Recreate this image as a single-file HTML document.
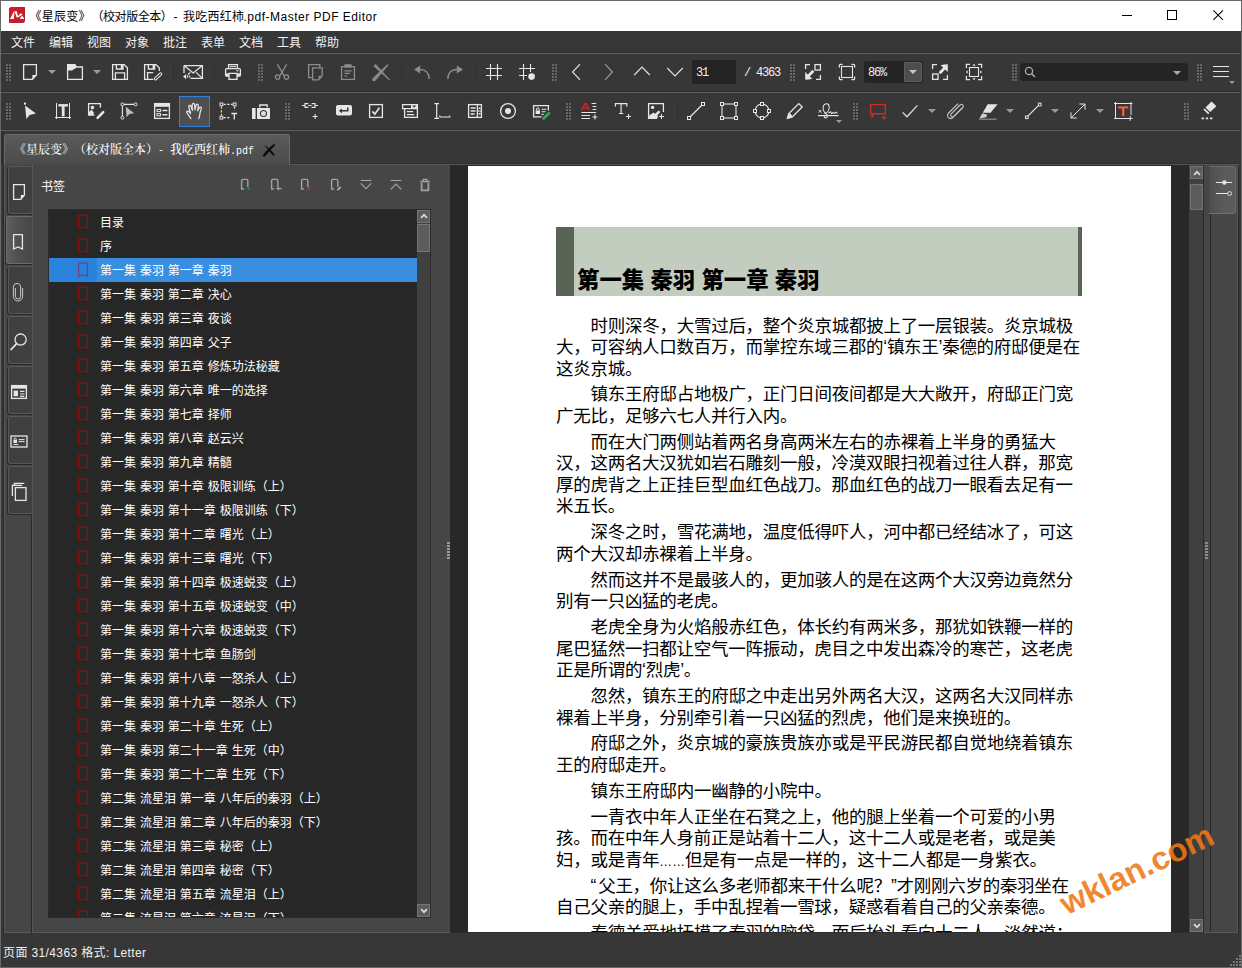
<!DOCTYPE html>
<html lang="zh-CN">
<head>
<meta charset="utf-8">
<title>《星辰变》（校对版全本）- 我吃西红柿.pdf-Master PDF Editor</title>
<style>
*{box-sizing:border-box;margin:0;padding:0}
html,body{width:1242px;height:968px;overflow:hidden}
body{position:relative;background:#373737;font-family:"Liberation Sans","Noto Sans CJK SC",sans-serif;font-size:12px;color:#f0f0f0;text-spacing-trim:space-all}
.abs{position:absolute}
.ic{position:absolute;overflow:visible;z-index:10}
#win{position:absolute;left:0;top:0;width:1242px;height:968px;border:1px solid #686868;pointer-events:none;z-index:50}
#title{position:absolute;left:1px;top:1px;width:1240px;height:30px;background:#fff;color:#000}
#title .txt{position:absolute;left:28.5px;top:7.5px;font-size:12px;line-height:16px;white-space:nowrap;letter-spacing:.25px}
#title .txt i{position:absolute;top:0;font-style:normal}
#menu{position:absolute;left:1px;top:31px;width:1240px;height:22px;background:#373737}
#menu span{position:absolute;top:4px;line-height:17px;font-size:12px;color:#f2f2f2;white-space:nowrap}
.hl{position:absolute;left:1px;width:1239px;height:2px;background:#606060;border-top:1px solid #2f2f2f;margin-top:-1px}
.grip{position:absolute;width:6px;height:18px;background-image:radial-gradient(circle,#6e6e6e 0.9px,transparent 1.1px);background-size:3px 3px}
.vsep{position:absolute;width:1px;height:20px;background:#2f2f2f}
.dd{position:absolute;width:0;height:0;border-left:4px solid transparent;border-right:4px solid transparent;border-top:4px solid #9a9a9a}
.box{position:absolute;background:#242424;border-radius:3px}
.tbtxt{position:absolute;font-size:12px;color:#f0f0f0;white-space:nowrap;line-height:14px;font-family:"Liberation Mono","Noto Sans CJK SC",monospace;letter-spacing:-1.2px}
#handbtn{position:absolute;left:179px;top:96px;width:31px;height:31px;border:1px solid #2a82da;background:#4f4f4f}
#tab{position:absolute;left:4px;top:134px;width:286px;height:31px;border:1px solid #6a6a6a;border-bottom:0;border-radius:3px 3px 0 0;background:linear-gradient(#5a5a5a,#4e4e4e 85%,#484848)}
#tab span{position:absolute;left:9px;top:6px;font-family:"Noto Serif CJK SC","Liberation Serif",serif;font-weight:500;font-size:12px;line-height:16px;color:#fff;white-space:nowrap}
#tab span b{font-weight:normal;font-family:"Liberation Mono",monospace;font-size:10px}
#leftedge{position:absolute;left:1px;top:131px;width:3px;height:34px;background:#303030}
#leftedge2{position:absolute;left:1px;top:165px;width:3px;height:769px;background:#383838;border-right:1px solid #272727}
#leftbar{position:absolute;left:4px;top:165px;width:28px;height:769px;background:#464646;border-left:1px solid #585858;border-right:1px solid #2a2a2a;border-bottom:1px solid #272727;box-shadow:inset 0 -1px 0 #5a5a5a}
.vtab{position:absolute;left:3px;width:24px;height:48px;border:1px solid #585858;border-right:0;border-radius:3px 0 0 3px;background:#404040;box-shadow:-1px 1px 0 #2a2a2a}
.vtab.on{left:1px;width:27px;background:linear-gradient(90deg,#5e5e5e,#505050 40%,#464646);border-color:#6c6c6c}
#panel{position:absolute;left:32px;top:165px;width:418px;height:769px;background:#464646;border-left:1px solid #585858;border-bottom:1px solid #272727;box-shadow:inset 0 -1px 0 #5a5a5a}
#list{position:absolute;left:48px;top:209px;width:383px;height:709px;background:#272727;overflow:hidden;border:1px solid #2b2b2b}
#rows{position:absolute;left:0;top:0;width:368px;height:707px;overflow:hidden}
.row{position:absolute;left:0;width:368px;height:24px;white-space:nowrap}
.row span{position:absolute;left:48px;top:0;height:24px;padding-left:3px;line-height:27px;font-size:12px;color:#fff;word-spacing:.55px;right:0}
.row .bk{position:absolute;left:28px;top:4px}
.row.sel .bk path{stroke:#6a4590}
.row.sel{background:#2a82da}
.row.sel span{background:#3a8ee0}
.sb{position:absolute;background:#404040}
.sbb{position:absolute;width:13px;height:13px;background:#5c5c5c;border:1px solid #747474}
.thumb{position:absolute;width:13px;background:#5c5c5c;border:1px solid #757575}
#doc{position:absolute;left:450px;top:165px;width:739px;height:768px;background:#282828;overflow:hidden;border-bottom:1px solid #2b2b2b}
#page{position:absolute;left:18px;top:1px;width:703px;height:780px;background:#fff;color:#000}
#hd{position:absolute;left:88px;top:61px;width:526px;height:69px;background:#c2cdc0;border-left:18px solid #596457;border-right:4px solid #596457}
#hd span{position:absolute;left:3px;top:40px;font-family:"Liberation Sans","Noto Sans CJK SC",sans-serif;font-weight:900;font-size:22.4px;line-height:28px;white-space:nowrap;color:#000}
.ln i{font-style:normal;font-size:12.8px;letter-spacing:0}
.ln b{font-weight:normal;margin-right:2px}
.ln{position:absolute;font-size:17.5px;letter-spacing:-.275px;line-height:24px;white-space:nowrap;color:#000;font-family:"Liberation Sans","Noto Sans CJK SC",sans-serif}
#wm{position:absolute;left:1136.5px;top:869.5px;font:bold 32.5px "Liberation Sans",sans-serif;color:rgba(240,120,20,.88);transform:translate(-50%,-50%) rotate(-25.8deg);white-space:nowrap;z-index:40}
#status{position:absolute;left:1px;top:933px;width:1239px;height:33px;background:#373737}
#status span{position:absolute;left:2px;top:12px;font-size:12px;line-height:16px;color:#f0f0f0;white-space:nowrap;letter-spacing:.38px}
#rpanel{position:absolute;left:1203px;top:165px;width:36px;height:769px;background:#464646;border-left:1px solid #2b2b2b;border-right:1px solid #272727;border-bottom:1px solid #272727;box-shadow:inset -1px -1px 0 #5a5a5a}
#rpanel i{position:absolute;left:6px;top:49px;width:1px;height:718px;background:#272727}
</style>
</head>
<body>
<div id="title">
<svg class="ic" style="left:8px;top:6px" width="16" height="16" viewBox="0 0 16 16"><defs><linearGradient id="lg" x1="0" y1="0" x2="1" y2="1"><stop offset="0" stop-color="#e01426"/><stop offset="1" stop-color="#b8222e"/></linearGradient></defs><path d="M1.600 0H16V14.400L14.400 16H0V1.600Z" fill="url(#lg)"/><path d="M1 12.100L4.700 4.800l.700-.200-.400 7.500zM5.700 4.200h2l1.400 5 2.500-3 2.100 1.400-4.700 3-1.400-.400-1.700-4.600zM10.800 11l2.700-2.200 1.700 3.300h-3.600z" fill="#fff"/></svg>
<div class="txt"><i style="left:0">《星辰变》</i><i style="left:62px;letter-spacing:-.45px">（校对版全本）</i><i style="left:144px">-</i><i style="left:153.500px">我吃西红柿</i><i style="left:214px;letter-spacing:.5px">.pdf-Master PDF Editor</i></div>
<svg class="ic" style="left:1121px;top:14px" width="10" height="1" viewBox="0 0 10 1" shape-rendering="crispEdges"><rect x="0" y="0" width="10" height="1" fill="#000"/></svg>
<svg class="ic" style="left:1166px;top:9px" width="10" height="10" viewBox="0 0 10 10" shape-rendering="crispEdges"><rect x=".5" y=".5" width="9" height="9" fill="none" stroke="#000" stroke-width="1"/></svg>
<svg class="ic" style="left:1212px;top:9px" width="11" height="11" viewBox="0 0 11 11"><path d="M.4 .4l9.500 9.500M9.900 .4l-9.500 9.500" stroke="#000" stroke-width="1.050"/></svg>
</div>
<div id="menu">
<span style="left:10px">文件</span><span style="left:48px">编辑</span><span style="left:86px">视图</span><span style="left:124px">对象</span><span style="left:162px">批注</span><span style="left:200px">表单</span><span style="left:238px">文档</span><span style="left:276px">工具</span><span style="left:314px">帮助</span>
</div>
<div class="hl" style="top:53px"></div>
<div class="hl" style="top:92px"></div>
<div class="hl" style="top:130px"></div>
<div id="handbtn"></div>
<svg class="ic" style="left:6px;top:64px" width="5" height="17" viewBox="0 0 5 17" ><rect x="0" y="0" width="2" height="2" fill="#676767"/><rect x="0" y="3" width="2" height="2" fill="#676767"/><rect x="0" y="6" width="2" height="2" fill="#676767"/><rect x="0" y="9" width="2" height="2" fill="#676767"/><rect x="0" y="12" width="2" height="2" fill="#676767"/><rect x="0" y="15" width="2" height="2" fill="#676767"/><rect x="3" y="0" width="2" height="2" fill="#676767"/><rect x="3" y="3" width="2" height="2" fill="#676767"/><rect x="3" y="6" width="2" height="2" fill="#676767"/><rect x="3" y="9" width="2" height="2" fill="#676767"/><rect x="3" y="12" width="2" height="2" fill="#676767"/><rect x="3" y="15" width="2" height="2" fill="#676767"/></svg>
<svg class="ic" style="left:22px;top:63px" width="16" height="18" viewBox="0 0 16 18" ><path d="M1.6 1.6h12.800v10.400l-4 4.400H1.600z" fill="none" stroke="#e6e6e6" stroke-width="1.3"/><path d="M14.400 12l-4 4.400v-4.400z" fill="#e6e6e6"/></svg>
<div class="dd" style="left:48px;top:70px;border-top-color:#9a9a9a"></div>
<svg class="ic" style="left:66px;top:63px" width="18" height="18" viewBox="0 0 18 18" ><path d="M1.600 16.400V1.600h7.400l1.600 2.400h5.800v12.400z" fill="none" stroke="#e6e6e6" stroke-width="1.3"/><path d="M1.600 1.600h7.400l1.600 2.400v.600l-4.600 2.800h-4.400z" fill="#e6e6e6"/></svg>
<div class="dd" style="left:93px;top:70px;border-top-color:#9a9a9a"></div>
<svg class="ic" style="left:111px;top:63px" width="18" height="18" viewBox="0 0 18 18" ><path d="M1.600 1.600h11.600l3.200 3.200v11.600H1.600z" fill="none" stroke="#e6e6e6" stroke-width="1.3"/><path d="M5.400 1.600v4.400h6.600V1.600" fill="none" stroke="#e6e6e6" stroke-width="1.3"/><path d="M9.800 1.600h2.200v4.400H9.800z" fill="#e6e6e6"/><path d="M4.400 16.400v-6.600h9.200v6.600" fill="none" stroke="#e6e6e6" stroke-width="1.3"/></svg>
<svg class="ic" style="left:143px;top:63px" width="20" height="18" viewBox="0 0 20 18" ><path d="M10.400 16.400H1.600V1.600h11.400l3.400 3.400v3" fill="none" stroke="#e6e6e6" stroke-width="1.3"/><path d="M5.400 1.600v4.400h6.200V1.600" fill="none" stroke="#e6e6e6" stroke-width="1.3"/><path d="M9.600 1.600h2v4.400h-2z" fill="#e6e6e6"/><path d="M4.600 16.400v-6.800h5.600" fill="none" stroke="#e6e6e6" stroke-width="1.3"/><path d="M12.600 15.800l5-4.800" stroke="#e6e6e6" stroke-width="3.300" stroke-linecap="round"/><path d="M12.600 15.800l5-4.800" stroke="#373737" stroke-width="1.200" stroke-linecap="round"/></svg>
<div class="vsep" style="left:173px;top:62px"></div>
<svg class="ic" style="left:182px;top:63px" width="22" height="18" viewBox="0 0 22 18" ><path d="M2 2.600h18.400v12.800H8.400" fill="none" stroke="#e6e6e6" stroke-width="1.3"/><path d="M2 2.600v7.400" fill="none" stroke="#e6e6e6" stroke-width="1.3"/><path d="M2 2.600l9.200 7.400 9.200-7.400M20.400 15.400l-6.300-6M8.300 9.400L6 11.600" fill="none" stroke="#e6e6e6" stroke-width="1.3"/><path d="M1 13.600l3.200-2.600v5.200z" fill="#e6e6e6"/><path d="M5 12.400h1.200v2.200H5zM7 12.400h1.200v2.200H7z" fill="#e6e6e6"/></svg>
<div class="vsep" style="left:214px;top:62px"></div>
<svg class="ic" style="left:224px;top:63px" width="18" height="18" viewBox="0 0 18 18" ><path d="M4.600 5.400V1.600h8.800v3.800" fill="none" stroke="#e6e6e6" stroke-width="1.3"/><path d="M6 3.600h6" stroke="#e6e6e6" stroke-width="1"/><rect x="1.600" y="5.600" width="14.800" height="7.600" rx="1.200" fill="none" stroke="#e6e6e6" stroke-width="1.3"/><path d="M2 10.400h14v2.600H2z" fill="#e6e6e6"/><path d="M5 10.400h8v6H5z" fill="#373737" stroke="#e6e6e6" stroke-width="1.300"/><path d="M12.400 7.800h2" stroke="#e6e6e6" stroke-width="1.200"/></svg>
<svg class="ic" style="left:258px;top:64px" width="5" height="17" viewBox="0 0 5 17" ><rect x="0" y="0" width="2" height="2" fill="#676767"/><rect x="0" y="3" width="2" height="2" fill="#676767"/><rect x="0" y="6" width="2" height="2" fill="#676767"/><rect x="0" y="9" width="2" height="2" fill="#676767"/><rect x="0" y="12" width="2" height="2" fill="#676767"/><rect x="0" y="15" width="2" height="2" fill="#676767"/><rect x="3" y="0" width="2" height="2" fill="#676767"/><rect x="3" y="3" width="2" height="2" fill="#676767"/><rect x="3" y="6" width="2" height="2" fill="#676767"/><rect x="3" y="9" width="2" height="2" fill="#676767"/><rect x="3" y="12" width="2" height="2" fill="#676767"/><rect x="3" y="15" width="2" height="2" fill="#676767"/></svg>
<svg class="ic" style="left:274px;top:63px" width="16" height="18" viewBox="0 0 16 18" ><path d="M3.400 1.400l6.600 11.200M12.600 1.400L6 12.600" fill="none" stroke="#8c8c8c" stroke-width="1.3"/><circle cx="3.600" cy="14" r="2.200" fill="none" stroke="#8c8c8c" stroke-width="1.3"/><circle cx="12.400" cy="14" r="2.200" fill="none" stroke="#8c8c8c" stroke-width="1.3"/></svg>
<svg class="ic" style="left:307px;top:63px" width="16" height="18" viewBox="0 0 16 18" ><path d="M1.600 1.600h11.200v13H1.600z" fill="none" stroke="#8c8c8c" stroke-width="1.3"/><path d="M5.600 4.800h9.600v8l-3.600 4H5.600z" fill="#373737" stroke="#8c8c8c" stroke-width="1.300"/><path d="M15.200 12.800l-3.600 4v-4z" fill="#8c8c8c"/></svg>
<svg class="ic" style="left:340px;top:63px" width="16" height="18" viewBox="0 0 16 18" ><path d="M1.600 3.600h12.800v12.800H1.600z" fill="none" stroke="#8c8c8c" stroke-width="1.3"/><path d="M4.400 1.200h7.200v3.400H4.400z" fill="#8c8c8c"/><path d="M4.400 7.800h7.200M4.400 10.400h5.600M4.400 13h3" stroke="#8c8c8c" stroke-width="1.200"/></svg>
<svg class="ic" style="left:371px;top:63px" width="20" height="19" viewBox="0 0 20 19" ><path d="M1.400 15.400L16.400 1.200l1.200.800L4.400 17.800c-1.600 1.400-4.200-.800-3-2.400z" fill="#8c8c8c"/><path d="M2.400 3l2.200-2L19 16.800l-.600.600z" fill="#8c8c8c"/></svg>
<div class="vsep" style="left:401px;top:62px"></div>
<svg class="ic" style="left:413px;top:64px" width="18" height="16" viewBox="0 0 18 16" ><path d="M16.200 15c0-6-3.500-9.600-9.200-9.600" fill="none" stroke="#8c8c8c" stroke-width="1.500"/><path d="M1 5.400l6.200-4v8z" fill="#8c8c8c"/></svg>
<svg class="ic" style="left:446px;top:64px" width="18" height="16" viewBox="0 0 18 16" ><path d="M1.800 15c0-6 3.500-9.600 9.200-9.600" fill="none" stroke="#8c8c8c" stroke-width="1.500"/><path d="M17 5.400l-6.200-4v8z" fill="#8c8c8c"/></svg>
<div class="vsep" style="left:475px;top:62px"></div>
<svg class="ic" style="left:485px;top:63px" width="18" height="18" viewBox="0 0 18 18" ><path d="M5.500 1v16M12.500 1v16M1 5.500h16M1 12.500h16" fill="none" stroke="#e6e6e6" stroke-width="1.1"/></svg>
<svg class="ic" style="left:518px;top:63px" width="18" height="18" viewBox="0 0 18 18" ><path d="M5.500 1v16M12.500 1v8M1 5.500h16M1 12.500h8" fill="none" stroke="#e6e6e6" stroke-width="1.1"/><circle cx="13.600" cy="13.600" r="3.300" fill="#e6e6e6"/></svg>
<svg class="ic" style="left:552px;top:64px" width="5" height="17" viewBox="0 0 5 17" ><rect x="0" y="0" width="2" height="2" fill="#676767"/><rect x="0" y="3" width="2" height="2" fill="#676767"/><rect x="0" y="6" width="2" height="2" fill="#676767"/><rect x="0" y="9" width="2" height="2" fill="#676767"/><rect x="0" y="12" width="2" height="2" fill="#676767"/><rect x="0" y="15" width="2" height="2" fill="#676767"/><rect x="3" y="0" width="2" height="2" fill="#676767"/><rect x="3" y="3" width="2" height="2" fill="#676767"/><rect x="3" y="6" width="2" height="2" fill="#676767"/><rect x="3" y="9" width="2" height="2" fill="#676767"/><rect x="3" y="12" width="2" height="2" fill="#676767"/><rect x="3" y="15" width="2" height="2" fill="#676767"/></svg>
<svg class="ic" style="left:571px;top:63px" width="10" height="18" viewBox="0 0 10 18" ><path d="M9 1.200L1.600 9 9 16.800" fill="none" stroke="#e6e6e6" stroke-width="1.1"/></svg>
<svg class="ic" style="left:604px;top:63px" width="10" height="18" viewBox="0 0 10 18" ><path d="M1 1.200L8.400 9 1 16.800" fill="none" stroke="#a0a0a0" stroke-width="1.100"/></svg>
<svg class="ic" style="left:633px;top:65px" width="18" height="11" viewBox="0 0 18 11" ><path d="M1.200 10L9 2l7.800 8" fill="none" stroke="#e6e6e6" stroke-width="1.1"/></svg>
<svg class="ic" style="left:666px;top:67px" width="18" height="11" viewBox="0 0 18 11" ><path d="M1.200 1L9 9l7.800-8" fill="none" stroke="#e6e6e6" stroke-width="1.1"/></svg>
<div class="box" style="left:692px;top:60px;width:44px;height:24px"></div>
<div class="tbtxt" style="left:696px;top:66px">31</div>
<div class="tbtxt" style="left:744px;top:66px">/ 4363</div>
<svg class="ic" style="left:790px;top:64px" width="5" height="17" viewBox="0 0 5 17" ><rect x="0" y="0" width="2" height="2" fill="#676767"/><rect x="0" y="3" width="2" height="2" fill="#676767"/><rect x="0" y="6" width="2" height="2" fill="#676767"/><rect x="0" y="9" width="2" height="2" fill="#676767"/><rect x="0" y="12" width="2" height="2" fill="#676767"/><rect x="0" y="15" width="2" height="2" fill="#676767"/><rect x="3" y="0" width="2" height="2" fill="#676767"/><rect x="3" y="3" width="2" height="2" fill="#676767"/><rect x="3" y="6" width="2" height="2" fill="#676767"/><rect x="3" y="9" width="2" height="2" fill="#676767"/><rect x="3" y="12" width="2" height="2" fill="#676767"/><rect x="3" y="15" width="2" height="2" fill="#676767"/></svg>
<svg class="ic" style="left:804px;top:63px" width="18" height="18" viewBox="0 0 18 18" ><path d="M1.600 6V1.600H6M16.400 12v4.400H12" fill="none" stroke="#e6e6e6" stroke-width="1.3"/><rect x="11" y="1.600" width="5.400" height="5.400" fill="none" stroke="#e6e6e6" stroke-width="1.3"/><path d="M1.200 16.800V9l2.600 2.400 4.600-4.600 2 2-4.600 4.600 2.600 2.400c-2.400.600-4.800 1-7.200 1z" fill="#e6e6e6"/></svg>
<svg class="ic" style="left:838px;top:63px" width="18" height="18" viewBox="0 0 18 18" ><rect x="3.500" y="3.500" width="11" height="11" fill="none" stroke="#e6e6e6" stroke-width="1.1"/><path d="M1.400 4.600V2.600a1.200 1.200 0 011.200-1.200h2M13.400 1.400h2a1.200 1.200 0 011.200 1.200v2M16.600 13.400v2a1.200 1.200 0 01-1.200 1.200h-2M4.600 16.600h-2a1.200 1.200 0 01-1.200-1.200v-2" fill="none" stroke="#e6e6e6" stroke-width="1.3"/></svg>
<div class="box" style="left:864px;top:61px;width:59px;height:22px;border-radius:3px"></div>
<div class="abs" style="left:904px;top:62px;width:18px;height:20px;background:#4e4e4e;border:1px solid #5c5c5c;border-radius:0 2px 2px 0"></div>
<div class="tbtxt" style="left:868px;top:66px">86%</div>
<div class="dd" style="left:909px;top:70px;border-top-color:#c8c8c8"></div>
<svg class="ic" style="left:931px;top:63px" width="18" height="18" viewBox="0 0 18 18" ><path d="M1.600 6V1.600H6M16.400 12v4.400H12" fill="none" stroke="#e6e6e6" stroke-width="1.3"/><rect x="1.600" y="11" width="5.400" height="5.400" fill="none" stroke="#e6e6e6" stroke-width="1.3"/><path d="M16.800 1.200V9l-2.600-2.400-4.600 4.600-2-2 4.600-4.600-2.600-2.400c2.400-.600 4.800-1 7.200-1z" fill="#e6e6e6"/></svg>
<svg class="ic" style="left:965px;top:63px" width="18" height="18" viewBox="0 0 18 18" ><rect x="4.500" y="4.500" width="9" height="9" fill="none" stroke="#e6e6e6" stroke-width="1.1"/><path d="M1.400 5V1.400H5M13 1.400h3.600V5M16.600 13v3.600H13M5 16.600H1.400V13" fill="none" stroke="#e6e6e6" stroke-width="1.3"/><path d="M9 .8l1.600 2H7.400zM9 17.200l1.600-2H7.400zM.8 9l2-1.600v3.200zM17.200 9l-2-1.600v3.200z" fill="#e6e6e6"/></svg>
<div class="abs" style="left:994px;top:66px;font-size:10px;color:#3b3b3b;letter-spacing:-2px">&gt;&gt;</div>
<svg class="ic" style="left:1012px;top:64px" width="5" height="17" viewBox="0 0 5 17" ><rect x="0" y="0" width="2" height="2" fill="#676767"/><rect x="0" y="3" width="2" height="2" fill="#676767"/><rect x="0" y="6" width="2" height="2" fill="#676767"/><rect x="0" y="9" width="2" height="2" fill="#676767"/><rect x="0" y="12" width="2" height="2" fill="#676767"/><rect x="0" y="15" width="2" height="2" fill="#676767"/><rect x="3" y="0" width="2" height="2" fill="#676767"/><rect x="3" y="3" width="2" height="2" fill="#676767"/><rect x="3" y="6" width="2" height="2" fill="#676767"/><rect x="3" y="9" width="2" height="2" fill="#676767"/><rect x="3" y="12" width="2" height="2" fill="#676767"/><rect x="3" y="15" width="2" height="2" fill="#676767"/></svg>
<div class="box" style="left:1020px;top:63px;width:168px;height:18px;border-radius:4px"></div>
<svg class="ic" style="left:1024px;top:66px" width="13" height="13" viewBox="0 0 13 13" ><circle cx="5" cy="5" r="3.600" fill="none" stroke="#a8a8a8" stroke-width="1.300"/><path d="M7.600 7.600l3.400 3.400" stroke="#a8a8a8" stroke-width="1.500"/></svg>
<div class="dd" style="left:1173px;top:71px;border-top-color:#a8a8a8"></div>
<svg class="ic" style="left:1197px;top:64px" width="5" height="17" viewBox="0 0 5 17" ><rect x="0" y="0" width="2" height="2" fill="#676767"/><rect x="0" y="3" width="2" height="2" fill="#676767"/><rect x="0" y="6" width="2" height="2" fill="#676767"/><rect x="0" y="9" width="2" height="2" fill="#676767"/><rect x="0" y="12" width="2" height="2" fill="#676767"/><rect x="0" y="15" width="2" height="2" fill="#676767"/><rect x="3" y="0" width="2" height="2" fill="#676767"/><rect x="3" y="3" width="2" height="2" fill="#676767"/><rect x="3" y="6" width="2" height="2" fill="#676767"/><rect x="3" y="9" width="2" height="2" fill="#676767"/><rect x="3" y="12" width="2" height="2" fill="#676767"/><rect x="3" y="15" width="2" height="2" fill="#676767"/></svg>
<svg class="ic" style="left:1213px;top:65px" width="17" height="13" viewBox="0 0 17 13" ><path d="M0 1.500h16M0 6.500h16M0 11.500h16" stroke="#e6e6e6" stroke-width="1.100"/></svg>
<div class="dd" style="left:1229px;top:81px;border-width:3px 3px 0 3px;border-top-color:#9a9a9a"></div>
<svg class="ic" style="left:6px;top:103px" width="5" height="17" viewBox="0 0 5 17" ><rect x="0" y="0" width="2" height="2" fill="#676767"/><rect x="0" y="3" width="2" height="2" fill="#676767"/><rect x="0" y="6" width="2" height="2" fill="#676767"/><rect x="0" y="9" width="2" height="2" fill="#676767"/><rect x="0" y="12" width="2" height="2" fill="#676767"/><rect x="0" y="15" width="2" height="2" fill="#676767"/><rect x="3" y="0" width="2" height="2" fill="#676767"/><rect x="3" y="3" width="2" height="2" fill="#676767"/><rect x="3" y="6" width="2" height="2" fill="#676767"/><rect x="3" y="9" width="2" height="2" fill="#676767"/><rect x="3" y="12" width="2" height="2" fill="#676767"/><rect x="3" y="15" width="2" height="2" fill="#676767"/></svg>
<svg class="ic" style="left:19px;top:101px" width="18" height="20" viewBox="0 0 18 20" ><path d="M6 4.400l1.400 13.600 3.200-4 6.400-1.400z" fill="#e6e6e6"/><rect x="5" y="1.600" width="2" height="2" fill="#e6e6e6"/></svg>
<svg class="ic" style="left:54px;top:102px" width="18" height="18" viewBox="0 0 18 18" ><path d="M2.500 1v16M15.500 1v16M1 15.500h16" stroke="#e6e6e6" stroke-width="1"/><path d="M1 15.500l1.500-1.200v2.400zM17 15.500l-1.500-1.200v2.400z" fill="#e6e6e6"/><path d="M4.400 3.300h9.600" stroke="#e6e6e6" stroke-width="2.400" fill="none"/><path d="M9.200 3v11.400" stroke="#e6e6e6" stroke-width="2.800" fill="none"/></svg>
<svg class="ic" style="left:87px;top:102px" width="20" height="18" viewBox="0 0 20 18" ><path d="M13.400 5.600V1.600H1.600v11.400h5.800" fill="none" stroke="#e6e6e6" stroke-width="1.3"/><circle cx="5.400" cy="5.600" r="1.800" fill="#e6e6e6"/><path d="M2 13v-3l2.400-2.200 2.600 2.600-1.200 2.600z" fill="#e6e6e6"/><path d="M10.600 15.800l5.600-5.600" stroke="#e6e6e6" stroke-width="2.600" stroke-linecap="round"/></svg>
<svg class="ic" style="left:120px;top:102px" width="20" height="18" viewBox="0 0 20 18" ><path d="M2.400 14.600V2.400h12.200" fill="none" stroke="#e6e6e6" stroke-width="1.1"/><circle cx="2.400" cy="2.400" r="1.500" fill="#373737" stroke="#e6e6e6" stroke-width="1"/><circle cx="15.600" cy="2.400" r="1.500" fill="#373737" stroke="#e6e6e6" stroke-width="1"/><circle cx="2.400" cy="15.600" r="1.500" fill="#373737" stroke="#e6e6e6" stroke-width="1"/><path d="M5.800 4.800l.8 10.400 2.800-3.200 4.800-.8z" fill="#bdbdbd"/></svg>
<svg class="ic" style="left:153px;top:102px" width="18" height="18" viewBox="0 0 18 18" ><rect x="1.600" y="1.600" width="14.800" height="14.800" fill="none" stroke="#e6e6e6" stroke-width="1.3"/><path d="M1.600 1.600h14.800v3.200H1.600z" fill="#e6e6e6"/><rect x="4" y="7.400" width="3.600" height="2.200" fill="none" stroke="#e6e6e6" stroke-width="1"/><rect x="4" y="11.600" width="3.600" height="2.200" fill="none" stroke="#e6e6e6" stroke-width="1"/><path d="M9.400 8.500h5M9.400 12.700h5" stroke="#e6e6e6" stroke-width="1.600"/></svg>
<svg class="ic" style="left:185px;top:102px" width="19" height="18" viewBox="0 0 19 18" ><path d="M6.200 17c-1.400-2-2.200-3.400-4-5.600-.9-1.200-.4-2.400.8-2.200 1.200.3 1.800 1.500 2.600 2.400C5 9 4.200 6.600 3.800 4.800 3.500 3.200 5.300 2.700 5.900 4.200L7.400 8.400C7.200 6 7 4 7.200 2.600 7.500 1.100 9.400 1.100 9.600 2.600L10 8c.3-1.800.6-3.600 1.100-4.900.6-1.500 2.400-1 2.200.6L12.700 8.800c.6-1.300 1-2.300 1.700-3.200.9-1.100 2.300-.4 1.900 1-.8 2.400-1.300 3.800-1.500 5.600-.2 1.800-.6 3.300-1.200 4.800" fill="none" stroke="#e6e6e6" stroke-width="1.250" stroke-linejoin="round"/></svg>
<svg class="ic" style="left:219px;top:102px" width="20" height="18" viewBox="0 0 20 18" ><path d="M4.600 2.400h9M2.400 4.600v9M4.600 15.600h6M15.600 4.600v4" fill="none" stroke="#e6e6e6" stroke-width="1.100" stroke-dasharray="2.200 1.400"/><rect x="1" y="1" width="2.8" height="2.8" fill="#373737" stroke="#e6e6e6" stroke-width="1"/><rect x="14.2" y="1" width="2.8" height="2.8" fill="#373737" stroke="#e6e6e6" stroke-width="1"/><rect x="1" y="14.2" width="2.8" height="2.8" fill="#373737" stroke="#e6e6e6" stroke-width="1"/><path d="M12.400 11.500h5.800M15.300 11.500V17.600" stroke="#e6e6e6" stroke-width="1.300"/></svg>
<svg class="ic" style="left:251px;top:103px" width="20" height="16" viewBox="0 0 20 16" ><path d="M1 5h3.600v11H1z" fill="#e6e6e6"/><path d="M6 5h13v11H6z" fill="#e6e6e6"/><path d="M8.800 4.600V2h7.400v2.600" fill="none" stroke="#e6e6e6" stroke-width="1.3"/><circle cx="12.500" cy="10.500" r="3.600" fill="#373737"/><circle cx="12.500" cy="10.500" r="2.500" fill="#dcdcdc"/></svg>
<svg class="ic" style="left:285px;top:103px" width="5" height="17" viewBox="0 0 5 17" ><rect x="0" y="0" width="2" height="2" fill="#676767"/><rect x="0" y="3" width="2" height="2" fill="#676767"/><rect x="0" y="6" width="2" height="2" fill="#676767"/><rect x="0" y="9" width="2" height="2" fill="#676767"/><rect x="0" y="12" width="2" height="2" fill="#676767"/><rect x="0" y="15" width="2" height="2" fill="#676767"/><rect x="3" y="0" width="2" height="2" fill="#676767"/><rect x="3" y="3" width="2" height="2" fill="#676767"/><rect x="3" y="6" width="2" height="2" fill="#676767"/><rect x="3" y="9" width="2" height="2" fill="#676767"/><rect x="3" y="12" width="2" height="2" fill="#676767"/><rect x="3" y="15" width="2" height="2" fill="#676767"/></svg>
<svg class="ic" style="left:301px;top:101px" width="18" height="18" viewBox="0 0 18 18" ><path d="M1 4.500h3M7.400 4.500h3.200M14 4.500H17" stroke="#e6e6e6" stroke-width="1.100"/><path d="M7.400 2.600H4v3.800h3.400M10.600 2.600H14v3.800h-3.400" fill="none" stroke="#e6e6e6" stroke-width="1.100"/><path d="M11.600 15.500h5M14.100 13v5" stroke="#e6e6e6" stroke-width="1.100"/></svg>
<svg class="ic" style="left:335px;top:104px" width="18" height="13" viewBox="0 0 18 13" ><rect x="1" y="1" width="16" height="10.500" rx="2" fill="#e6e6e6"/><path d="M12.800 3.400v3.400H6" fill="none" stroke="#373737" stroke-width="1.500"/><path d="M3.800 6.800l3.200-2.400v4.800z" fill="#373737"/></svg>
<svg class="ic" style="left:368px;top:103px" width="16" height="16" viewBox="0 0 16 16" ><rect x="1.600" y="1.600" width="12.800" height="12.800" fill="none" stroke="#e6e6e6" stroke-width="1.3"/><path d="M4.400 8.400l2.400 2.800 4.600-6.400" fill="none" stroke="#e6e6e6" stroke-width="1.700"/></svg>
<svg class="ic" style="left:401px;top:103px" width="18" height="16" viewBox="0 0 18 16" ><path d="M1.600 1.600h14.800v4H1.600z" fill="none" stroke="#e6e6e6" stroke-width="1.3"/><path d="M10 1.600h6.400v4H10z" fill="#e6e6e6"/><path d="M11.200 2.600h4l-2 2.200z" fill="#373737"/><path d="M3.600 5.600v8.800h12.800V5.600" fill="none" stroke="#e6e6e6" stroke-width="1.3"/><path d="M5.800 8.600h6.400M5.800 11.600h7.400" stroke="#e6e6e6" stroke-width="1.300"/></svg>
<svg class="ic" style="left:433px;top:102px" width="18" height="18" viewBox="0 0 18 18" ><path d="M1.400 1.600h4.600M1.400 16.400h4.600M3.700 1.600v14.800" stroke="#e6e6e6" stroke-width="1.200"/><path d="M6.800 13.600v1.400h10v-1.400" fill="none" stroke="#e6e6e6" stroke-width="1.1"/></svg>
<svg class="ic" style="left:467px;top:103px" width="16" height="16" viewBox="0 0 16 16" ><rect x="1.600" y="1.600" width="12.800" height="12.800" fill="none" stroke="#e6e6e6" stroke-width="1.3"/><path d="M10.400 1.600v12.800" fill="none" stroke="#e6e6e6" stroke-width="1.3"/><path d="M3.600 5h5M3.600 8h5M3.600 11h4" stroke="#e6e6e6" stroke-width="1.300"/><path d="M11.200 6h2.800l-1.400-2zM11.200 10h2.800l-1.400 2z" fill="#e6e6e6"/><path d="M10.400 8h4" stroke="#e6e6e6" stroke-width="1"/></svg>
<svg class="ic" style="left:499px;top:102px" width="18" height="18" viewBox="0 0 18 18" ><circle cx="9" cy="9" r="7.400" fill="none" stroke="#e6e6e6" stroke-width="1.3"/><circle cx="9" cy="9" r="3" fill="#e6e6e6"/></svg>
<svg class="ic" style="left:532px;top:104px" width="20" height="17" viewBox="0 0 20 17" ><path d="M16.400 6.400V1.600H1.600v11.200h8" fill="none" stroke="#e6e6e6" stroke-width="1.3"/><path d="M3.600 6.400h4.400v3.600H3.600z" fill="#e6e6e6"/><path d="M4.600 6.400V5a1.200 1.200 0 012.400 0v1.400" fill="none" stroke="#e6e6e6" stroke-width="1"/><path d="M9.600 5.200h5M9.600 7.800h4M9.600 10.400h2" stroke="#e6e6e6" stroke-width="1.100"/><path d="M11.600 14.600l5.400-5.400" stroke="#2faa4f" stroke-width="2.800" stroke-linecap="round"/></svg>
<svg class="ic" style="left:566px;top:103px" width="5" height="17" viewBox="0 0 5 17" ><rect x="0" y="0" width="2" height="2" fill="#676767"/><rect x="0" y="3" width="2" height="2" fill="#676767"/><rect x="0" y="6" width="2" height="2" fill="#676767"/><rect x="0" y="9" width="2" height="2" fill="#676767"/><rect x="0" y="12" width="2" height="2" fill="#676767"/><rect x="0" y="15" width="2" height="2" fill="#676767"/><rect x="3" y="0" width="2" height="2" fill="#676767"/><rect x="3" y="3" width="2" height="2" fill="#676767"/><rect x="3" y="6" width="2" height="2" fill="#676767"/><rect x="3" y="9" width="2" height="2" fill="#676767"/><rect x="3" y="12" width="2" height="2" fill="#676767"/><rect x="3" y="15" width="2" height="2" fill="#676767"/></svg>
<svg class="ic" style="left:580px;top:102px" width="18" height="18" viewBox="0 0 18 18" ><path d="M1.600 8.400L5.200 1.400h.8L9.600 8.400M2.800 6h5.600" fill="none" stroke="#e02020" stroke-width="1.400"/><path d="M11.600 1.500h4.600M12.600 4.500h3.600M12.600 7.500h3.600M1.400 10.500h14.800M1.400 13.500h8.600M1.400 16.500h8.600" stroke="#e6e6e6" stroke-width="1.100"/><path d="M12.400 15h5M14.900 12.500v5" stroke="#e6e6e6" stroke-width="1.100"/></svg>
<svg class="ic" style="left:614px;top:102px" width="18" height="18" viewBox="0 0 18 18" ><path d="M1.400 4.400V1.600h11.400v2.800M7.100 1.600v10M5 11.500h4.200" fill="none" stroke="#e6e6e6" stroke-width="1.200"/><path d="M12 14.500h5M14.500 12v5" stroke="#e6e6e6" stroke-width="1.100"/></svg>
<svg class="ic" style="left:647px;top:102px" width="18" height="18" viewBox="0 0 18 18" ><path d="M16.400 10V1.600H1.600v14.800H10" fill="none" stroke="#e6e6e6" stroke-width="1.3"/><circle cx="5.600" cy="5.400" r="1.700" fill="#e6e6e6"/><path d="M2.200 16V13.600l4.400-3 1.600 1.200 3.400-3.400 1.800 1.600-2.800 3 .2 3z" fill="#e6e6e6"/><path d="M12 14.500h5M14.500 12v5" stroke="#e6e6e6" stroke-width="1.100"/></svg>
<div class="vsep" style="left:677px;top:101px"></div>
<svg class="ic" style="left:686px;top:101px" width="20" height="20" viewBox="0 0 20 20" ><path d="M4 16L16 4" stroke="#e6e6e6" stroke-width="1.200"/><rect x="1.5" y="15.5" width="3" height="3" fill="#373737" stroke="#e6e6e6" stroke-width="1"/><rect x="15.5" y="1.5" width="3" height="3" fill="#373737" stroke="#e6e6e6" stroke-width="1"/></svg>
<svg class="ic" style="left:719px;top:101px" width="20" height="20" viewBox="0 0 20 20" ><rect x="3" y="3" width="14" height="14" fill="none" stroke="#e6e6e6" stroke-width="1.1"/><rect x="1.5" y="1.5" width="3" height="3" fill="#373737" stroke="#e6e6e6" stroke-width="1"/><rect x="1.5" y="15.5" width="3" height="3" fill="#373737" stroke="#e6e6e6" stroke-width="1"/><rect x="15.5" y="1.5" width="3" height="3" fill="#373737" stroke="#e6e6e6" stroke-width="1"/><rect x="15.5" y="15.5" width="3" height="3" fill="#373737" stroke="#e6e6e6" stroke-width="1"/></svg>
<svg class="ic" style="left:752px;top:101px" width="20" height="20" viewBox="0 0 20 20" ><circle cx="10" cy="10" r="7" fill="none" stroke="#e6e6e6" stroke-width="1.1"/><rect x="8.5" y="1.5" width="3" height="3" fill="#373737" stroke="#e6e6e6" stroke-width="1"/><rect x="8.5" y="15.5" width="3" height="3" fill="#373737" stroke="#e6e6e6" stroke-width="1"/><rect x="1.5" y="8.5" width="3" height="3" fill="#373737" stroke="#e6e6e6" stroke-width="1"/><rect x="15.5" y="8.5" width="3" height="3" fill="#373737" stroke="#e6e6e6" stroke-width="1"/></svg>
<svg class="ic" style="left:785px;top:102px" width="20" height="18" viewBox="0 0 20 18" ><path d="M2.400 16.400l1.200-4.600L13.800 1.600l3.400 3.400L7 15.200z" fill="none" stroke="#e6e6e6" stroke-width="1.3"/><path d="M2.400 16.400l1.200-4.600 1.600-.2 1.800 1.800-.2 1.800z" fill="#e6e6e6"/></svg>
<svg class="ic" style="left:817px;top:102px" width="24" height="22" viewBox="0 0 24 22" ><path d="M1 13.600h20.600" stroke="#e6e6e6" stroke-width="1.200"/><path d="M1.800 8l2.600 2.600M4.400 8l-2.600 2.600" stroke="#e6e6e6" stroke-width="1"/><path d="M7.400 11.400c3.400-.4 5-3.600 4.800-6.600C12 1.200 7.600.8 6.400 4c-1 2.800.4 6.400 2.600 7.800 1.600 1 1.800 3.400.2 4-1.600.6-2.600-1.400-1.400-2.800M11.600 11.400c1-1.600 2.400-2.200 2.600-.6.200 1.200.6 1 1.400 0 .6-.8 1.200-.8 1.400 0 .2.800.8.800 1.400 0l.6-.6 1.400 1.200" fill="none" stroke="#e6e6e6" stroke-width="1.050"/></svg>
<div class="dd" style="left:836px;top:120px;border-width:3px 3px 0 3px;border-top-color:#9a9a9a"></div>
<svg class="ic" style="left:853px;top:103px" width="5" height="17" viewBox="0 0 5 17" ><rect x="0" y="0" width="2" height="2" fill="#676767"/><rect x="0" y="3" width="2" height="2" fill="#676767"/><rect x="0" y="6" width="2" height="2" fill="#676767"/><rect x="0" y="9" width="2" height="2" fill="#676767"/><rect x="0" y="12" width="2" height="2" fill="#676767"/><rect x="0" y="15" width="2" height="2" fill="#676767"/><rect x="3" y="0" width="2" height="2" fill="#676767"/><rect x="3" y="3" width="2" height="2" fill="#676767"/><rect x="3" y="6" width="2" height="2" fill="#676767"/><rect x="3" y="9" width="2" height="2" fill="#676767"/><rect x="3" y="12" width="2" height="2" fill="#676767"/><rect x="3" y="15" width="2" height="2" fill="#676767"/></svg>
<svg class="ic" style="left:869px;top:103px" width="20" height="18" viewBox="0 0 20 18" ><path d="M1.600 1.600h14.800v9.200H4.800l-1.600 2.800-.2-2.800H1.600z" fill="none" stroke="#d42a20" stroke-width="1.400"/><path d="M12.400 14.600h5M14.900 12.100v5" stroke="#d42a20" stroke-width="1.200"/></svg>
<svg class="ic" style="left:901px;top:103px" width="18" height="16" viewBox="0 0 18 16" ><path d="M1.600 9.400l4.400 4.400L16.400 2.400" fill="none" stroke="#dcdcdc" stroke-width="1.300"/></svg>
<div class="dd" style="left:928px;top:109px;border-top-color:#9a9a9a"></div>
<svg class="ic" style="left:945px;top:101px" width="22" height="20" viewBox="0 0 22 20" ><path d="M18.400 5.600L8.600 15.400c-1.600 1.600-4.200-.6-2.400-2.600L15 4c1.800-1.800 4.600.6 2.600 2.800L8 16.400c-3 3-7.600-1-4.400-4.400L13 2.600" fill="none" stroke="#c8c8c8" stroke-width="1.100"/></svg>
<svg class="ic" style="left:978px;top:102px" width="20" height="18" viewBox="0 0 20 18" ><path d="M9.600 2.200h10l-7 8.600H4.800z" fill="#e4e4e4"/><path d="M4.400 11.200l5 1.600-1.400 2.400-6.600 1.400z" fill="#d0d0d0"/><path d="M1 17.200h17.600" stroke="#8a8a8a" stroke-width="1.300"/></svg>
<div class="dd" style="left:1006px;top:109px;border-top-color:#9a9a9a"></div>
<svg class="ic" style="left:1024px;top:102px" width="18" height="18" viewBox="0 0 18 18" ><path d="M3.800 14.200L14.600 3.400" stroke="#e6e6e6" stroke-width="1.200"/><rect x="1.5" y="14" width="2.6" height="2.6" fill="#373737" stroke="#e6e6e6" stroke-width="1"/><rect x="14.4" y="1.2" width="2.6" height="2.6" fill="#373737" stroke="#e6e6e6" stroke-width="1"/></svg>
<div class="dd" style="left:1051px;top:109px;border-top-color:#9a9a9a"></div>
<svg class="ic" style="left:1069px;top:102px" width="18" height="18" viewBox="0 0 18 18" ><path d="M2 16L16 2M2 10.400V16h5.600M10.400 2H16v5.600" fill="none" stroke="#e6e6e6" stroke-width="1"/></svg>
<div class="dd" style="left:1096px;top:109px;border-top-color:#9a9a9a"></div>
<svg class="ic" style="left:1113px;top:101px" width="20" height="20" viewBox="0 0 20 20" ><path d="M2.500 1v17M18 1v13M1 2.500h18.400M1 17.500h14" stroke="#e6e6e6" stroke-width="1"/><path d="M5 6.400h10.400" stroke="#f0643c" stroke-width="2" fill="none"/><path d="M10.200 6v9" stroke="#f0643c" stroke-width="2.300" fill="none"/><path d="M14.800 17.500h4.800M17.200 15v4.800" stroke="#e6e6e6" stroke-width="1"/></svg>
<div class="abs" style="left:1168px;top:105px;font-size:10px;color:#3b3b3b;letter-spacing:-2px">&gt;&gt;</div>
<svg class="ic" style="left:1184px;top:103px" width="5" height="17" viewBox="0 0 5 17" ><rect x="0" y="0" width="2" height="2" fill="#676767"/><rect x="0" y="3" width="2" height="2" fill="#676767"/><rect x="0" y="6" width="2" height="2" fill="#676767"/><rect x="0" y="9" width="2" height="2" fill="#676767"/><rect x="0" y="12" width="2" height="2" fill="#676767"/><rect x="0" y="15" width="2" height="2" fill="#676767"/><rect x="3" y="0" width="2" height="2" fill="#676767"/><rect x="3" y="3" width="2" height="2" fill="#676767"/><rect x="3" y="6" width="2" height="2" fill="#676767"/><rect x="3" y="9" width="2" height="2" fill="#676767"/><rect x="3" y="12" width="2" height="2" fill="#676767"/><rect x="3" y="15" width="2" height="2" fill="#676767"/></svg>
<svg class="ic" style="left:1200px;top:100px" width="18" height="20" viewBox="0 0 18 20" ><path d="M11.600 1.600l4.800 4.600-6.200 5.800-4.800-4.600z" fill="#e6e6e6"/><path d="M4.600 8.400l4.800 4.600-1.200 1.200-4.800-4.600z" fill="#e6e6e6"/><path d="M1.600 18.400h2.400M5.800 18.400h2.400M10 18.400h2.400" stroke="#e6e6e6" stroke-width="1.600"/></svg>
<div class="abs" style="left:1229px;top:105px;font-size:10px;color:#3b3b3b;letter-spacing:-2px">&gt;&gt;</div>
<svg class="ic" style="left:12px;top:183px" width="14" height="18" viewBox="0 0 14 18" ><path d="M1.600 1.600h10.800v10.400l-3.600 4.400H1.600z" fill="none" stroke="#e6e6e6" stroke-width="1.3"/><path d="M12.400 12l-3.600 4.400v-4.400z" fill="#e6e6e6"/></svg>
<svg class="ic" style="left:12px;top:233px" width="12" height="18" viewBox="0 0 12 18" ><path d="M1.600 1.600h8.800v14.400L6 14l-4.400 2z" fill="none" stroke="#e6e6e6" stroke-width="1.3"/></svg>
<svg class="ic" style="left:12px;top:282px" width="12" height="20" viewBox="0 0 12 20" ><path d="M3.400 6v8.400a2.600 2.600 0 005.200 0V5a3.600 3.600 0 00-7.200 0v9.400a4.600 4.600 0 009.200 0V6" fill="none" stroke="#c8c8c8" stroke-width="1"/></svg>
<svg class="ic" style="left:9px;top:332px" width="20" height="20" viewBox="0 0 20 20" ><circle cx="11.600" cy="7.600" r="5.600" fill="none" stroke="#e6e6e6" stroke-width="1.3" stroke-width="1.500"/><path d="M7.400 11.800L1.600 18" stroke="#e6e6e6" stroke-width="1.800"/></svg>
<svg class="ic" style="left:10px;top:384px" width="18" height="16" viewBox="0 0 18 16" ><rect x="1.600" y="1.600" width="14.800" height="12.800" fill="none" stroke="#e6e6e6" stroke-width="1.3"/><path d="M1.600 1.600h14.800v3H1.600z" fill="#e6e6e6"/><rect x="3.600" y="6.600" width="4.400" height="5.600" fill="#e6e6e6"/><path d="M10 7.400h4.400M10 10h4.400M10 12.400h4.400" stroke="#e6e6e6" stroke-width="1.100"/></svg>
<svg class="ic" style="left:10px;top:435px" width="18" height="13" viewBox="0 0 18 13" ><rect x="1" y="1" width="16" height="11" fill="none" stroke="#e6e6e6" stroke-width="1.3" stroke-width="1.100"/><rect x="3.400" y="5" width="3.600" height="3" fill="#e6e6e6"/><path d="M4.200 5V4a1 1 0 012 0v1" fill="none" stroke="#e6e6e6" stroke-width=".9"/><path d="M8.600 4.600h6M8.600 6.600h6M3.400 9.600h5" stroke="#e6e6e6" stroke-width="1"/></svg>
<svg class="ic" style="left:11px;top:482px" width="18" height="20" viewBox="0 0 18 20" ><path d="M3.400 3.400V1.400h9.800" fill="none" stroke="#e6e6e6" stroke-width="1.3" stroke-width="1.100"/><path d="M1.400 14V3.400h9.800" fill="none" stroke="#e6e6e6" stroke-width="1.3" stroke-width="1.100"/><rect x="4.400" y="5.600" width="10.600" height="12.800" fill="none" stroke="#e6e6e6" stroke-width="1.3"/></svg>
<svg class="ic" style="left:240px;top:178px" width="13" height="14" viewBox="0 0 13 14" ><path d="M1.600 11.400V2.600a1.200 1.200 0 011.200-1.200h3.800a1.200 1.200 0 011.200 1.200v6.400" fill="none" stroke="#a2a2a2" stroke-width="1.400"/><path d="M1.600 11.400l2.600-.800" fill="none" stroke="#a2a2a2" stroke-width="1.200"/><path d="M7.200 10.600h3.400M8.900 8.900v3.400" stroke="#1e8a30" stroke-width="1.200"/></svg>
<svg class="ic" style="left:270px;top:178px" width="13" height="14" viewBox="0 0 13 14" ><path d="M1.600 11.400V2.600a1.200 1.200 0 011.200-1.200h3.800a1.200 1.200 0 011.200 1.200v6.400" fill="none" stroke="#a2a2a2" stroke-width="1.400"/><path d="M1.600 11.400l2.600-.800" fill="none" stroke="#a2a2a2" stroke-width="1.200"/><path d="M7 10.600h4.600M8.800 8.800l-1.800 1.800 1.800 1.800" fill="none" stroke="#b8b8b8" stroke-width="1"/></svg>
<svg class="ic" style="left:300px;top:178px" width="13" height="14" viewBox="0 0 13 14" ><path d="M1.600 11.400V2.600a1.200 1.200 0 011.200-1.200h3.800a1.200 1.200 0 011.200 1.200v6.400" fill="none" stroke="#a2a2a2" stroke-width="1.400"/><path d="M1.600 11.400l2.600-.800" fill="none" stroke="#a2a2a2" stroke-width="1.200"/><path d="M7.400 9.200l2.800 2.800M10.200 9.200l-2.800 2.800" stroke="#c83030" stroke-width="1.200"/></svg>
<svg class="ic" style="left:330px;top:178px" width="13" height="14" viewBox="0 0 13 14" ><path d="M1.600 11.400V2.600a1.200 1.200 0 011.200-1.200h3.800a1.200 1.200 0 011.200 1.200v6.400" fill="none" stroke="#a2a2a2" stroke-width="1.400"/><path d="M1.600 11.400l2.600-.800" fill="none" stroke="#a2a2a2" stroke-width="1.200"/><path d="M7 12.600l.4-1.600 2.600-2.600 1.200 1.200-2.600 2.600z" fill="#b8b8b8"/></svg>
<svg class="ic" style="left:359px;top:179px" width="14" height="12" viewBox="0 0 14 12" ><path d="M1.600 1.500h10.800" stroke="#a2a2a2" stroke-width="1.100"/><path d="M1.800 4.400L7 9.600l5.200-5.200" fill="none" stroke="#a2a2a2" stroke-width="1.200"/></svg>
<svg class="ic" style="left:389px;top:179px" width="14" height="12" viewBox="0 0 14 12" ><path d="M1.600 1.500h10.800" stroke="#a2a2a2" stroke-width="1.100"/><path d="M1.800 10.400L7 5.200l5.200 5.200" fill="none" stroke="#a2a2a2" stroke-width="1.200"/></svg>
<svg class="ic" style="left:419px;top:178px" width="12" height="14" viewBox="0 0 12 14" ><path d="M1.200 3.600h9.600" stroke="#a2a2a2" stroke-width="1.600"/><path d="M4.200 3V1.400h3.600V3" fill="none" stroke="#a2a2a2" stroke-width="1.300"/><path d="M2.600 5v7.400h6.800V5" fill="none" stroke="#a2a2a2" stroke-width="1.800"/></svg>
<svg class="ic" style="left:418.5px;top:212px" width="10" height="8" viewBox="0 0 10 8" ><path d="M2 5.800l3-3 3 3" fill="none" stroke="#d8d8d8" stroke-width="1.800"/></svg>
<svg class="ic" style="left:418.5px;top:906.5px" width="10" height="8" viewBox="0 0 10 8" ><path d="M2 2.200l3 3 3-3" fill="none" stroke="#d8d8d8" stroke-width="1.800"/></svg>
<svg class="ic" style="left:1191.5px;top:168.5px" width="10" height="8" viewBox="0 0 10 8" ><path d="M2 5.800l3-3 3 3" fill="none" stroke="#d8d8d8" stroke-width="1.800"/></svg>
<svg class="ic" style="left:1191.5px;top:921.5px" width="10" height="8" viewBox="0 0 10 8" ><path d="M2 2.200l3 3 3-3" fill="none" stroke="#d8d8d8" stroke-width="1.800"/></svg>
<div class="abs" style="left:1209px;top:166px;width:27px;height:48px;background:linear-gradient(90deg,#4c4c4c,#595959 45%,#5c5c5c);border:1px solid #6e6e6e;border-left:0;border-radius:0 3px 3px 0;z-index:9"></div>
<svg class="ic" style="left:1215px;top:177px" width="18" height="20" viewBox="0 0 18 20" ><path d="M1 5.500h16" stroke="#e6e6e6" stroke-width="1"/><circle cx="9.400" cy="5.500" r="2.200" fill="#e6e6e6"/><path d="M1 16.500h12" stroke="#e6e6e6" stroke-width="1"/><circle cx="14.600" cy="16.500" r="1.900" fill="#555" stroke="#e6e6e6" stroke-width="1"/></svg>
<div class="abs" style="left:447px;top:542px;width:3px;height:18px;background-image:linear-gradient(#9a9a9a 2px,transparent 2px);background-size:3px 3px;z-index:9"></div>
<div class="abs" style="left:1205px;top:542px;width:3px;height:18px;background-image:linear-gradient(#8a8a8a 2px,transparent 2px);background-size:3px 3px;z-index:9"></div>
<svg class="ic" style="left:1229.5px;top:955px" width="12" height="12" viewBox="0 0 12 12" ><rect x="9" y="0" width="2" height="2" fill="#7a7a7a"/><rect x="6" y="3" width="2" height="2" fill="#7a7a7a"/><rect x="9" y="3" width="2" height="2" fill="#7a7a7a"/><rect x="3" y="6" width="2" height="2" fill="#7a7a7a"/><rect x="6" y="6" width="2" height="2" fill="#7a7a7a"/><rect x="9" y="6" width="2" height="2" fill="#7a7a7a"/><rect x="0" y="9" width="2" height="2" fill="#7a7a7a"/><rect x="3" y="9" width="2" height="2" fill="#7a7a7a"/><rect x="6" y="9" width="2" height="2" fill="#7a7a7a"/><rect x="9" y="9" width="2" height="2" fill="#7a7a7a"/></svg>
<div id="leftedge"></div><div id="leftedge2"></div>
<div class="hl" style="top:164px;left:290px;width:950px;background:#555"></div>
<div id="tab"><span>《星辰变》（校对版全本）<b style="position:relative;top:-1.5px">- </b>我吃西红柿<b>.pdf</b></span>
<svg class="ic" style="left:257px;top:8px" width="14" height="14" viewBox="0 0 14 14"><path d="M.8 12.400C4 8 8 3.600 12.600.6c.800 1.200 0 2.600-1.600 4C8.400 7 5.800 10 3.800 12.800 2.600 14 .6 13.600.8 12.400z" fill="#0c0c0c"/><path d="M2 2C6 4 10.400 8.200 13.200 12.200c-1.200 1-2.600 0-3.400-1C7.400 8 4.600 5 2 2z" fill="#0c0c0c"/></svg>
</div>
<div id="leftbar">
<div class="vtab" style="top:1px"></div>
<div class="vtab on" style="top:51px"></div>
<div class="vtab" style="top:101px"></div>
<div class="vtab" style="top:151px"></div>
<div class="vtab" style="top:201px"></div>
<div class="vtab" style="top:251px"></div>
<div class="vtab" style="top:301px"></div>
</div>
<div id="panel">
<div class="abs" style="left:8px;top:14px;font-size:12px;line-height:16px;color:#fff">书签</div>
</div>
<div id="list"><div id="rows">
<div class="row" style="top:0px"><svg class="bk" width="12" height="16" viewBox="0 0 12 16"><path d="M1.600 1.200h8.800v13.200l-4.400-1.500-4.400 1.500z" fill="none" stroke="#8a0f0f" stroke-width="1.3"/></svg><span>目录</span></div>
<div class="row" style="top:24px"><svg class="bk" width="12" height="16" viewBox="0 0 12 16"><path d="M1.600 1.200h8.800v13.200l-4.400-1.500-4.400 1.500z" fill="none" stroke="#8a0f0f" stroke-width="1.3"/></svg><span>序</span></div>
<div class="row sel" style="top:48px"><svg class="bk" width="12" height="16" viewBox="0 0 12 16"><path d="M1.600 1.200h8.800v13.200l-4.400-1.500-4.400 1.500z" fill="none" stroke="#8a0f0f" stroke-width="1.3"/></svg><span>第一集 秦羽 第一章 秦羽</span></div>
<div class="row" style="top:72px"><svg class="bk" width="12" height="16" viewBox="0 0 12 16"><path d="M1.600 1.200h8.800v13.200l-4.400-1.500-4.400 1.500z" fill="none" stroke="#8a0f0f" stroke-width="1.3"/></svg><span>第一集 秦羽 第二章 决心</span></div>
<div class="row" style="top:96px"><svg class="bk" width="12" height="16" viewBox="0 0 12 16"><path d="M1.600 1.200h8.800v13.200l-4.400-1.500-4.400 1.500z" fill="none" stroke="#8a0f0f" stroke-width="1.3"/></svg><span>第一集 秦羽 第三章 夜谈</span></div>
<div class="row" style="top:120px"><svg class="bk" width="12" height="16" viewBox="0 0 12 16"><path d="M1.600 1.200h8.800v13.200l-4.400-1.500-4.400 1.500z" fill="none" stroke="#8a0f0f" stroke-width="1.3"/></svg><span>第一集 秦羽 第四章 父子</span></div>
<div class="row" style="top:144px"><svg class="bk" width="12" height="16" viewBox="0 0 12 16"><path d="M1.600 1.200h8.800v13.200l-4.400-1.500-4.400 1.500z" fill="none" stroke="#8a0f0f" stroke-width="1.3"/></svg><span>第一集 秦羽 第五章 修炼功法秘藏</span></div>
<div class="row" style="top:168px"><svg class="bk" width="12" height="16" viewBox="0 0 12 16"><path d="M1.600 1.200h8.800v13.200l-4.400-1.500-4.400 1.500z" fill="none" stroke="#8a0f0f" stroke-width="1.3"/></svg><span>第一集 秦羽 第六章 唯一的选择</span></div>
<div class="row" style="top:192px"><svg class="bk" width="12" height="16" viewBox="0 0 12 16"><path d="M1.600 1.200h8.800v13.200l-4.400-1.500-4.400 1.500z" fill="none" stroke="#8a0f0f" stroke-width="1.3"/></svg><span>第一集 秦羽 第七章 择师</span></div>
<div class="row" style="top:216px"><svg class="bk" width="12" height="16" viewBox="0 0 12 16"><path d="M1.600 1.200h8.800v13.200l-4.400-1.500-4.400 1.500z" fill="none" stroke="#8a0f0f" stroke-width="1.3"/></svg><span>第一集 秦羽 第八章 赵云兴</span></div>
<div class="row" style="top:240px"><svg class="bk" width="12" height="16" viewBox="0 0 12 16"><path d="M1.600 1.200h8.800v13.200l-4.400-1.500-4.400 1.500z" fill="none" stroke="#8a0f0f" stroke-width="1.3"/></svg><span>第一集 秦羽 第九章 精髓</span></div>
<div class="row" style="top:264px"><svg class="bk" width="12" height="16" viewBox="0 0 12 16"><path d="M1.600 1.200h8.800v13.200l-4.400-1.500-4.400 1.500z" fill="none" stroke="#8a0f0f" stroke-width="1.3"/></svg><span>第一集 秦羽 第十章 极限训练（上）</span></div>
<div class="row" style="top:288px"><svg class="bk" width="12" height="16" viewBox="0 0 12 16"><path d="M1.600 1.200h8.800v13.200l-4.400-1.500-4.400 1.500z" fill="none" stroke="#8a0f0f" stroke-width="1.3"/></svg><span>第一集 秦羽 第十一章 极限训练（下）</span></div>
<div class="row" style="top:312px"><svg class="bk" width="12" height="16" viewBox="0 0 12 16"><path d="M1.600 1.200h8.800v13.200l-4.400-1.500-4.400 1.500z" fill="none" stroke="#8a0f0f" stroke-width="1.3"/></svg><span>第一集 秦羽 第十二章 曙光（上）</span></div>
<div class="row" style="top:336px"><svg class="bk" width="12" height="16" viewBox="0 0 12 16"><path d="M1.600 1.200h8.800v13.200l-4.400-1.500-4.400 1.500z" fill="none" stroke="#8a0f0f" stroke-width="1.3"/></svg><span>第一集 秦羽 第十三章 曙光（下）</span></div>
<div class="row" style="top:360px"><svg class="bk" width="12" height="16" viewBox="0 0 12 16"><path d="M1.600 1.200h8.800v13.200l-4.400-1.500-4.400 1.500z" fill="none" stroke="#8a0f0f" stroke-width="1.3"/></svg><span>第一集 秦羽 第十四章 极速蜕变（上）</span></div>
<div class="row" style="top:384px"><svg class="bk" width="12" height="16" viewBox="0 0 12 16"><path d="M1.600 1.200h8.800v13.200l-4.400-1.500-4.400 1.500z" fill="none" stroke="#8a0f0f" stroke-width="1.3"/></svg><span>第一集 秦羽 第十五章 极速蜕变（中）</span></div>
<div class="row" style="top:408px"><svg class="bk" width="12" height="16" viewBox="0 0 12 16"><path d="M1.600 1.200h8.800v13.200l-4.400-1.500-4.400 1.500z" fill="none" stroke="#8a0f0f" stroke-width="1.3"/></svg><span>第一集 秦羽 第十六章 极速蜕变（下）</span></div>
<div class="row" style="top:432px"><svg class="bk" width="12" height="16" viewBox="0 0 12 16"><path d="M1.600 1.200h8.800v13.200l-4.400-1.500-4.400 1.500z" fill="none" stroke="#8a0f0f" stroke-width="1.3"/></svg><span>第一集 秦羽 第十七章 鱼肠剑</span></div>
<div class="row" style="top:456px"><svg class="bk" width="12" height="16" viewBox="0 0 12 16"><path d="M1.600 1.200h8.800v13.200l-4.400-1.500-4.400 1.500z" fill="none" stroke="#8a0f0f" stroke-width="1.3"/></svg><span>第一集 秦羽 第十八章 一怒杀人（上）</span></div>
<div class="row" style="top:480px"><svg class="bk" width="12" height="16" viewBox="0 0 12 16"><path d="M1.600 1.200h8.800v13.200l-4.400-1.500-4.400 1.500z" fill="none" stroke="#8a0f0f" stroke-width="1.3"/></svg><span>第一集 秦羽 第十九章 一怒杀人（下）</span></div>
<div class="row" style="top:504px"><svg class="bk" width="12" height="16" viewBox="0 0 12 16"><path d="M1.600 1.200h8.800v13.200l-4.400-1.500-4.400 1.500z" fill="none" stroke="#8a0f0f" stroke-width="1.3"/></svg><span>第一集 秦羽 第二十章 生死（上）</span></div>
<div class="row" style="top:528px"><svg class="bk" width="12" height="16" viewBox="0 0 12 16"><path d="M1.600 1.200h8.800v13.200l-4.400-1.500-4.400 1.500z" fill="none" stroke="#8a0f0f" stroke-width="1.3"/></svg><span>第一集 秦羽 第二十一章 生死（中）</span></div>
<div class="row" style="top:552px"><svg class="bk" width="12" height="16" viewBox="0 0 12 16"><path d="M1.600 1.200h8.800v13.200l-4.400-1.500-4.400 1.500z" fill="none" stroke="#8a0f0f" stroke-width="1.3"/></svg><span>第一集 秦羽 第二十二章 生死（下）</span></div>
<div class="row" style="top:576px"><svg class="bk" width="12" height="16" viewBox="0 0 12 16"><path d="M1.600 1.200h8.800v13.200l-4.400-1.500-4.400 1.500z" fill="none" stroke="#8a0f0f" stroke-width="1.3"/></svg><span>第二集 流星泪 第一章 八年后的秦羽（上）</span></div>
<div class="row" style="top:600px"><svg class="bk" width="12" height="16" viewBox="0 0 12 16"><path d="M1.600 1.200h8.800v13.200l-4.400-1.500-4.400 1.500z" fill="none" stroke="#8a0f0f" stroke-width="1.3"/></svg><span>第二集 流星泪 第二章 八年后的秦羽（下）</span></div>
<div class="row" style="top:624px"><svg class="bk" width="12" height="16" viewBox="0 0 12 16"><path d="M1.600 1.200h8.800v13.200l-4.400-1.500-4.400 1.500z" fill="none" stroke="#8a0f0f" stroke-width="1.3"/></svg><span>第二集 流星泪 第三章 秘密（上）</span></div>
<div class="row" style="top:648px"><svg class="bk" width="12" height="16" viewBox="0 0 12 16"><path d="M1.600 1.200h8.800v13.200l-4.400-1.500-4.400 1.500z" fill="none" stroke="#8a0f0f" stroke-width="1.3"/></svg><span>第二集 流星泪 第四章 秘密（下）</span></div>
<div class="row" style="top:672px"><svg class="bk" width="12" height="16" viewBox="0 0 12 16"><path d="M1.600 1.200h8.800v13.200l-4.400-1.500-4.400 1.500z" fill="none" stroke="#8a0f0f" stroke-width="1.3"/></svg><span>第二集 流星泪 第五章 流星泪（上）</span></div>
<div class="row" style="top:696px"><svg class="bk" width="12" height="16" viewBox="0 0 12 16"><path d="M1.600 1.200h8.800v13.200l-4.400-1.500-4.400 1.500z" fill="none" stroke="#8a0f0f" stroke-width="1.3"/></svg><span>第二集 流星泪 第六章 流星泪（下）</span></div>
</div>
<div class="sb" style="left:368px;top:0;width:13px;height:707px"></div>
<div class="sbb" style="left:368px;top:0"></div>
<div class="thumb" style="left:368px;top:14px;height:28px"></div>
<div class="sbb" style="left:368px;top:694px"></div>
</div>
<div id="doc">
<div id="page">
<div id="hd"><span>第一集 秦羽 第一章 秦羽</span></div>
<div class="ln" style="left:122.60000000000002px;top:147.50px">时则深冬，大雪过后，整个炎京城都披上了一层银装。炎京城极</div>
<div class="ln" style="left:88px;top:169.05px">大，可容纳人口数百万，而掌控东域三郡的‘镇东王’秦德的府邸便是在</div>
<div class="ln" style="left:88px;top:190.59px">这炎京城。</div>
<div class="ln" style="left:122.60000000000002px;top:216.44px">镇东王府邸占地极广，正门日间夜间都是大大敞开，府邸正门宽</div>
<div class="ln" style="left:88px;top:237.98px">广无比，足够六七人并行入内。</div>
<div class="ln" style="left:122.60000000000002px;top:263.83px">而在大门两侧站着两名身高两米左右的赤裸着上半身的勇猛大</div>
<div class="ln" style="left:88px;top:285.37px">汉，这两名大汉犹如岩石雕刻一般，冷漠双眼扫视着过往人群，那宽</div>
<div class="ln" style="left:88px;top:306.92px">厚的虎背之上正挂巨型血红色战刀。那血红色的战刀一眼看去足有一</div>
<div class="ln" style="left:88px;top:328.46px">米五长。</div>
<div class="ln" style="left:122.60000000000002px;top:354.31px">深冬之时，雪花满地，温度低得吓人，河中都已经结冰了，可这</div>
<div class="ln" style="left:88px;top:375.85px">两个大汉却赤裸着上半身。</div>
<div class="ln" style="left:122.60000000000002px;top:401.69px">然而这并不是最骇人的，更加骇人的是在这两个大汉旁边竟然分</div>
<div class="ln" style="left:88px;top:423.24px">别有一只凶猛的老虎。</div>
<div class="ln" style="left:122.60000000000002px;top:449.08px">老虎全身为火焰般赤红色，体长约有两米多，那犹如铁鞭一样的</div>
<div class="ln" style="left:88px;top:470.63px">尾巴猛然一扫都让空气一阵振动，虎目之中发出森冷的寒芒，这老虎</div>
<div class="ln" style="left:88px;top:492.17px">正是所谓的‘烈虎’。</div>
<div class="ln" style="left:122.60000000000002px;top:518.02px">忽然，镇东王的府邸之中走出另外两名大汉，这两名大汉同样赤</div>
<div class="ln" style="left:88px;top:539.56px">裸着上半身，分别牵引着一只凶猛的烈虎，他们是来换班的。</div>
<div class="ln" style="left:122.60000000000002px;top:565.41px">府邸之外，炎京城的豪族贵族亦或是平民游民都自觉地绕着镇东</div>
<div class="ln" style="left:88px;top:586.95px">王的府邸走开。</div>
<div class="ln" style="left:122.60000000000002px;top:612.80px">镇东王府邸内一幽静的小院中。</div>
<div class="ln" style="left:122.60000000000002px;top:638.64px">一青衣中年人正坐在石凳之上，他的腿上坐着一个可爱的小男</div>
<div class="ln" style="left:88px;top:660.19px">孩。而在中年人身前正是站着十二人，这十二人或是老者，或是美</div>
<div class="ln" style="left:88px;top:681.73px">妇，或是青年<i>……</i>但是有一点是一样的，这十二人都是一身紫衣。</div>
<div class="ln" style="left:122.60000000000002px;top:707.58px"><b>“</b>父王，你让这么多老师都来干什么呢？”才刚刚六岁的秦羽坐在</div>
<div class="ln" style="left:88px;top:729.12px">自己父亲的腿上，手中乱捏着一雪球，疑惑看着自己的父亲秦德。</div>
<div class="ln" style="left:122.60000000000002px;top:754.97px">秦德关爱地抚摸了秦羽的脑袋，而后抬头看向十二人，淡然道：</div>
</div>
</div>
<div class="sb" style="left:1189px;top:165px;width:14px;height:767px"></div>
<div class="sbb" style="left:1190px;top:166px"></div>
<div class="thumb" style="left:1190px;top:184px;height:26px"></div>
<div class="sbb" style="left:1190px;top:919px"></div>
<div id="rpanel"><i></i></div>
<div id="status"><span>页面 31/4363 格式: Letter</span></div>
<div id="wm">wklan.com</div>
<div id="win"></div>
</body>
</html>
